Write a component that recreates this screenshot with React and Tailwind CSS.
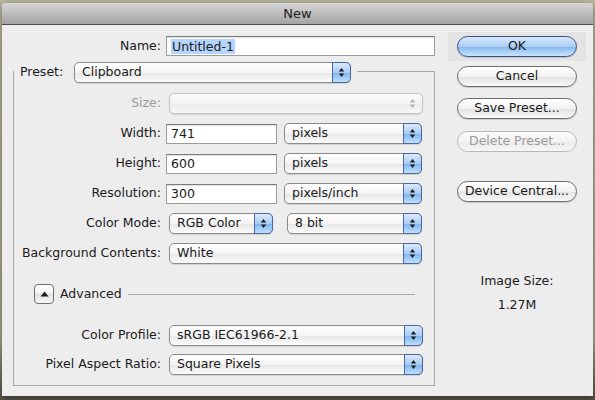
import { clsx } from 'clsx';

const font = "font-['Lucida_Grande','DejaVu_Sans',sans-serif] text-[12.5px] text-[#1a1a1a]";

const Arrows = ({ disabled }) => (
  <svg width="7" height="11" viewBox="0 0 7 11" className="block">
    <path d="M3.5 1 L6.2 4.6 H0.8 Z" fill={disabled ? '#b4b4b4' : '#1c1c1c'} />
    <path d="M0.8 6.4 H6.2 L3.5 10 Z" fill={disabled ? '#b4b4b4' : '#1c1c1c'} />
  </svg>
);

const Popup = ({ value, className, disabled }) => (
  <div
    className={clsx(
      'flex h-[21px] items-stretch rounded-[5px] border shadow-[0_1px_1px_rgba(0,0,0,0.12)]',
      disabled
        ? 'border-[#c4c4c4] bg-[linear-gradient(180deg,#fbfbfb_0%,#f3f3f3_50%,#ebebeb_51%,#f6f6f6_100%)]'
        : 'border-[#8a8a8a] bg-[linear-gradient(180deg,#ffffff_0%,#f4f4f4_50%,#e7e7e7_51%,#fbfbfb_100%)]',
      className
    )}
  >
    <div className="flex flex-1 items-center pl-[7px] leading-none">{value}</div>
    {disabled ? (
      <div className="flex w-[19px] items-center justify-center">
        <Arrows disabled />
      </div>
    ) : (
      <div className="-my-px -mr-px flex w-[19px] items-center justify-center rounded-r-[5px] border border-[#4a66a6] bg-[linear-gradient(180deg,#dbeafc_0%,#a9cbf4_50%,#7db3ee_51%,#bfe0fb_100%)]">
        <Arrows />
      </div>
    )}
  </div>
);

const Field = ({ value, className, selected }) => (
  <div
    className={clsx(
      'flex h-[20px] items-center border border-[#9c9c9c] border-t-[#7c7c7c] bg-white pl-[4px] shadow-[inset_0_1px_1px_rgba(0,0,0,0.12)]',
      className
    )}
  >
    <span className={clsx('leading-[15px]', selected && 'bg-[#b5d5ff] px-px')}>{value}</span>
  </div>
);

const Button = ({ children, primary, disabled, className }) => (
  <div
    className={clsx(
      'flex h-[21px] w-[120px] items-center justify-center rounded-full border leading-none shadow-[0_1px_1px_rgba(0,0,0,0.15)]',
      primary
        ? 'border-[#3b4f8c] bg-[linear-gradient(180deg,#d9e9fc_0%,#aacdf4_50%,#84b7ef_51%,#c9e6fd_100%)]'
        : disabled
          ? 'border-[#b8b8b8] bg-[linear-gradient(180deg,#fbfbfb_0%,#f2f2f2_50%,#e9e9e9_51%,#f7f7f7_100%)] text-[#9a9a9a] shadow-none'
          : 'border-[#6c6c6c] bg-[linear-gradient(180deg,#ffffff_0%,#f2f2f2_50%,#e2e2e2_51%,#fafafa_100%)]',
      className
    )}
  >
    {children}
  </div>
);

const Row = ({ label, children, className, dim }) => (
  <div className={clsx('flex h-[21px] items-center', className)}>
    <div className={clsx('w-[147px] text-right leading-none', dim && 'text-[#9a9a9a]')}>{label}</div>
    {children}
  </div>
);

export default function App() {
  return (
    <div className={clsx('h-[400px] w-[595px] overflow-hidden bg-[linear-gradient(180deg,#b9b79f_0%,#a7a58c_85%,#57514a_100%)] pl-[2px] pt-[3px]', font)}>
      <div className="flex h-[393px] w-[591px] flex-col overflow-hidden rounded-t-[4px] bg-[#ededed] shadow-[0_2px_6px_rgba(0,0,0,0.45)]">
        <div className="flex h-[22px] shrink-0 items-center justify-center border-b border-[#4f4f4f] bg-[linear-gradient(180deg,#d6d6d6_0%,#bcbcbc_50%,#a4a4a4_100%)] pt-px text-[13px] text-[#222]">
          New
        </div>

        <div className="flex">
          {/* left */}
          <div className="flex w-[434px] flex-col">
            <div className="mt-[11px] flex h-[20px] items-center">
              <div className="w-[159px] text-right leading-none">Name:</div>
              <Field value="Untitled-1" selected className="ml-[5px] w-[269px]" />
            </div>

            <div className="ml-[11px] mt-[15px] flex w-[422px] flex-col border border-[#a9a9a9] pb-[10px]">
              <div className="-mt-[10px] flex h-[21px] items-center self-start bg-[#ededed] pl-[6px] pr-[6px]">
                <div className="w-[48px] leading-none">Preset:</div>
                <Popup value="Clipboard" className="ml-[6px] w-[277px]" />
              </div>

              <Row label="Size:" dim className="mt-[10px]">
                <Popup value="" disabled className="ml-[8px] w-[254px]" />
              </Row>
              <Row label="Width:" className="mt-[9px]">
                <Field value="741" className="ml-[5px] w-[111px]" />
                <Popup value="pixels" className="ml-[7px] w-[138px]" />
              </Row>
              <Row label="Height:" className="mt-[9px]">
                <Field value="600" className="ml-[5px] w-[111px]" />
                <Popup value="pixels" className="ml-[7px] w-[138px]" />
              </Row>
              <Row label="Resolution:" className="mt-[9px]">
                <Field value="300" className="ml-[5px] w-[111px]" />
                <Popup value="pixels/inch" className="ml-[7px] w-[138px]" />
              </Row>
              <Row label="Color Mode:" className="mt-[9px]">
                <Popup value="RGB Color" className="ml-[8px] w-[104px]" />
                <Popup value="8 bit" className="ml-[14px] w-[135px]" />
              </Row>
              <Row label="Background Contents:" className="mt-[9px]">
                <Popup value="White" className="ml-[8px] w-[253px]" />
              </Row>

              <div className="mt-[20px] flex h-[20px] items-center">
                <div className="ml-[20px] flex h-[20px] w-[20px] items-center justify-center rounded-[4px] border border-[#6e6e6e] bg-[linear-gradient(180deg,#ffffff_0%,#f0f0f0_50%,#e0e0e0_51%,#f8f8f8_100%)]">
                  <svg width="9" height="6" viewBox="0 0 9 6">
                    <path d="M4.5 0.5 L8.5 5.5 H0.5 Z" fill="#1c1c1c" />
                  </svg>
                </div>
                <div className="ml-[6px] leading-none">Advanced</div>
                <div className="ml-[6px] mr-[19px] h-px flex-1 bg-[#a9a9a9]" />
              </div>

              <Row label="Color Profile:" className="mt-[21px]">
                <Popup value="sRGB IEC61966-2.1" className="ml-[8px] w-[254px]" />
              </Row>
              <Row label="Pixel Aspect Ratio:" className="mt-[8px]">
                <Popup value="Square Pixels" className="ml-[8px] w-[254px]" />
              </Row>
            </div>
          </div>

          {/* right */}
          <div className="ml-[12px] mt-[7px] flex flex-col items-start">
            <div className="bg-[#e4e4e4] px-[9px] py-[4px]">
              <Button primary>OK</Button>
            </div>
            <Button className="ml-[9px] mt-[5px]">Cancel</Button>
            <Button className="ml-[9px] mt-[11px]">Save Preset...</Button>
            <Button disabled className="ml-[9px] mt-[12px]">Delete Preset...</Button>
            <Button className="ml-[9px] mt-[29px]">Device Central...</Button>
            <div className="ml-[9px] mt-[71px] w-[120px] text-center leading-[15px]">Image Size:</div>
            <div className="ml-[9px] mt-[9px] w-[120px] text-center leading-[15px]">1.27M</div>
          </div>
        </div>
      </div>
    </div>
  );
}
